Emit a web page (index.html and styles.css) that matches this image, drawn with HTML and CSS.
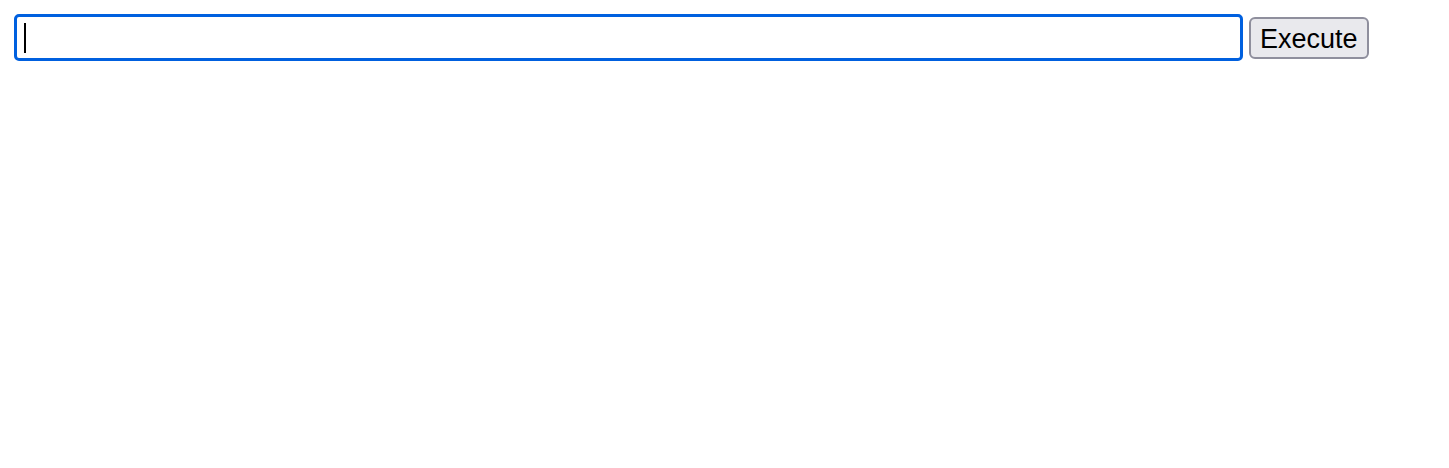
FILE: index.html
```html
<!DOCTYPE html>
<html>
<head>
<meta charset="utf-8">
<link rel="stylesheet" href="styles.css">
</head>
<body>
<form class="bar">
  <input class="cmd" type="text" aria-label="Command">
  <button class="exec" type="button">Execute</button>
</form>
</body>
</html>
```
FILE: styles.css
```css
html, body {
  margin: 0;
  padding: 0;
  background: #ffffff;
}
.bar {
  display: flex;
  align-items: center;
  gap: 6px;
  padding: 14px 0 0 14px;
  margin: 0;
}
.cmd {
  box-sizing: border-box;
  width: 1229px;
  height: 47px;
  margin: 0;
  padding: 0 8px;
  border: 3px solid #0060df;
  border-radius: 5px;
  outline: none;
  font: 26px "Liberation Sans", Arial, sans-serif;
  background-color: #ffffff;
  background-image: linear-gradient(#000000, #000000);
  background-size: 2px 30px;
  background-position: 7px 6px;
  background-repeat: no-repeat;
}
.exec {
  box-sizing: border-box;
  height: 42px;
  margin: 0;
  padding: 3px 9px 0;
  border: 2px solid #8f8f9d;
  border-radius: 6px;
  background: #e9e9ed;
  color: #000000;
  font: 27px "Liberation Sans", Arial, sans-serif;
  line-height: 1;
}
```
